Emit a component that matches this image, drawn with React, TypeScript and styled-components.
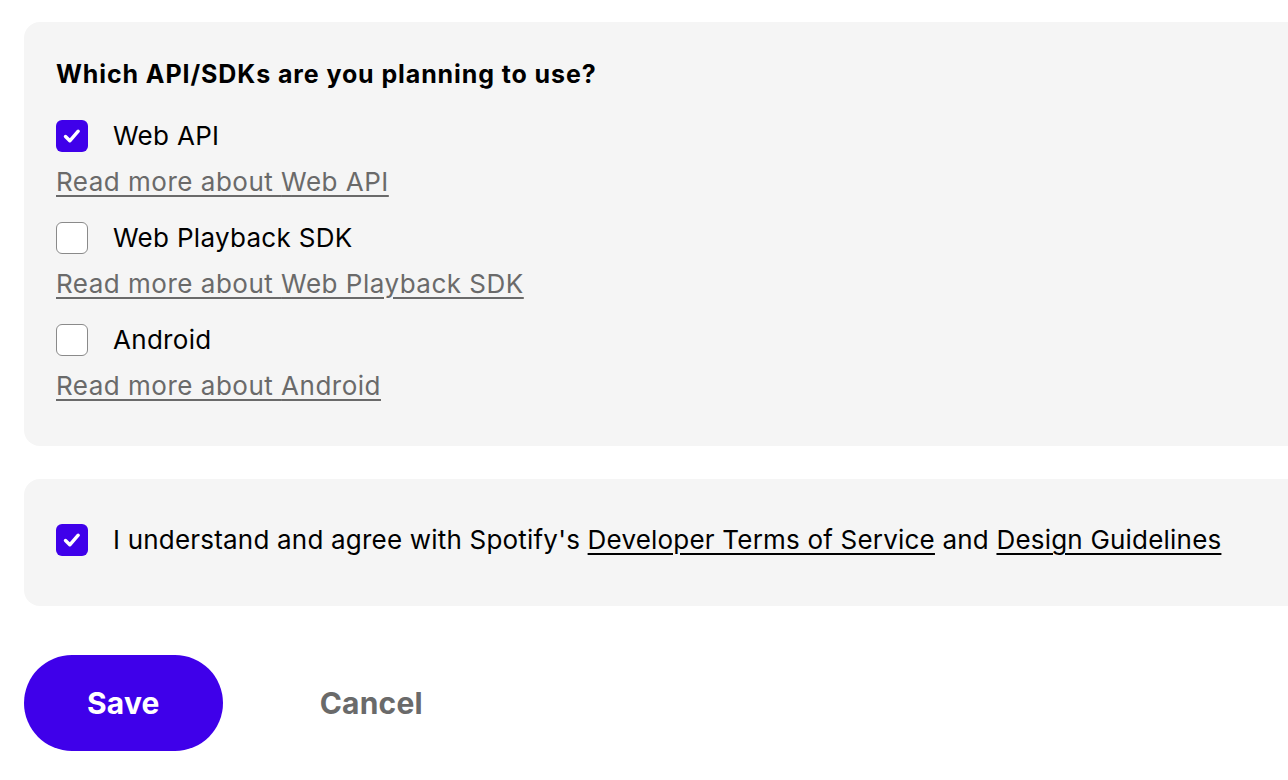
import React from "react";
import styled, { createGlobalStyle } from "styled-components";

const FONT = `Inter, "Liberation Sans", sans-serif`;
const PURPLE = "#3f00ea";

const Global = createGlobalStyle`
  html, body {
    margin: 0;
    padding: 0;
    background: #ffffff;
    overflow: hidden;
  }
  body {
    font-family: ${FONT};
    color: #000000;
    -webkit-font-smoothing: antialiased;
  }
`;

const Page = styled.div`
  width: 1320px;
  padding: 22px 0 0 24px;
  display: flex;
  flex-direction: column;
`;

const Card = styled.section<{ $pt: number; $pb: number }>`
  background: #f5f5f5;
  border-radius: 16px;
  padding: ${(p) => p.$pt}px 32px ${(p) => p.$pb}px 32px;
  display: flex;
  flex-direction: column;
`;

const Heading = styled.h2`
  margin: 0 0 30px 0;
  font-size: 25px;
  line-height: 32px;
  font-weight: 700;
  letter-spacing: 0.9px;
`;

const OptionList = styled.div`
  display: flex;
  flex-direction: column;
  gap: 24px;
`;

const Option = styled.div`
  display: flex;
  flex-direction: column;
  gap: 14px;
`;

const CheckRow = styled.label`
  display: flex;
  align-items: center;
  gap: 25px;
  height: 32px;
  font-size: 26px;
  line-height: 32px;
  letter-spacing: 0.3px;
  cursor: pointer;
`;

const AgreeText = styled.span`
  letter-spacing: 0.2px;
`;

const Box = styled.span<{ $checked: boolean }>`
  flex: none;
  box-sizing: border-box;
  width: 32px;
  height: 32px;
  border-radius: 6px;
  background: ${(p) => (p.$checked ? PURPLE : "#ffffff")};
  border: ${(p) => (p.$checked ? "none" : "1.5px solid #8a8a8a")};
  display: flex;
  align-items: center;
  justify-content: center;
`;

const MoreLink = styled.a`
  align-self: flex-start;
  font-size: 26px;
  line-height: 32px;
  letter-spacing: 0.5px;
  color: #6a6a6a;
  text-decoration: underline;
  text-decoration-thickness: 1.5px;
  text-underline-offset: 4px;
`;

const InlineLink = styled.a`
  color: #000000;
  text-decoration: underline;
  text-decoration-thickness: 1.5px;
  text-underline-offset: 4px;
`;

const Actions = styled.div`
  display: flex;
  align-items: center;
  gap: 34px;
  margin-top: 49px;
`;

const Button = styled.button<{ $primary?: boolean }>`
  height: 96px;
  padding: 0 63px;
  border: none;
  border-radius: 48px;
  font-family: ${FONT};
  font-size: 30px;
  font-weight: 700;
  letter-spacing: 0.2px;
  background: ${(p) => (p.$primary ? PURPLE : "transparent")};
  color: ${(p) => (p.$primary ? "#ffffff" : "#6a6a6a")};
  cursor: pointer;
`;

const Gap = styled.div`
  height: 33px;
`;

function Check({ checked }: { checked: boolean }) {
  return (
    <Box $checked={checked}>
      {checked && (
        <svg width="32" height="32" viewBox="0 0 32 32">
          <polyline
            points="9.5,16.5 13.8,20.8 22.2,11.2"
            fill="none"
            stroke="#ffffff"
            strokeWidth="3.4"
            strokeLinecap="round"
            strokeLinejoin="round"
          />
        </svg>
      )}
    </Box>
  );
}

const options = [
  { name: "Web API", checked: true },
  { name: "Web Playback SDK", checked: false },
  { name: "Android", checked: false },
];

export default function App() {
  return (
    <>
      <Global />
      <Page>
        <Card $pt={36} $pb={44}>
          <Heading>Which API/SDKs are you planning to use?</Heading>
          <OptionList>
            {options.map((o) => (
              <Option key={o.name}>
                <CheckRow>
                  <Check checked={o.checked} />
                  {o.name}
                </CheckRow>
                <MoreLink href="#">Read more about {o.name}</MoreLink>
              </Option>
            ))}
          </OptionList>
        </Card>
        <Gap />
        <Card $pt={45} $pb={50}>
          <CheckRow>
            <Check checked={true} />
            <AgreeText>
              I understand and agree with Spotify's{" "}
              <InlineLink href="#">Developer Terms of Service</InlineLink> and{" "}
              <InlineLink href="#">Design Guidelines</InlineLink>
            </AgreeText>
          </CheckRow>
        </Card>
        <Actions>
          <Button $primary>Save</Button>
          <Button>Cancel</Button>
        </Actions>
      </Page>
    </>
  );
}
